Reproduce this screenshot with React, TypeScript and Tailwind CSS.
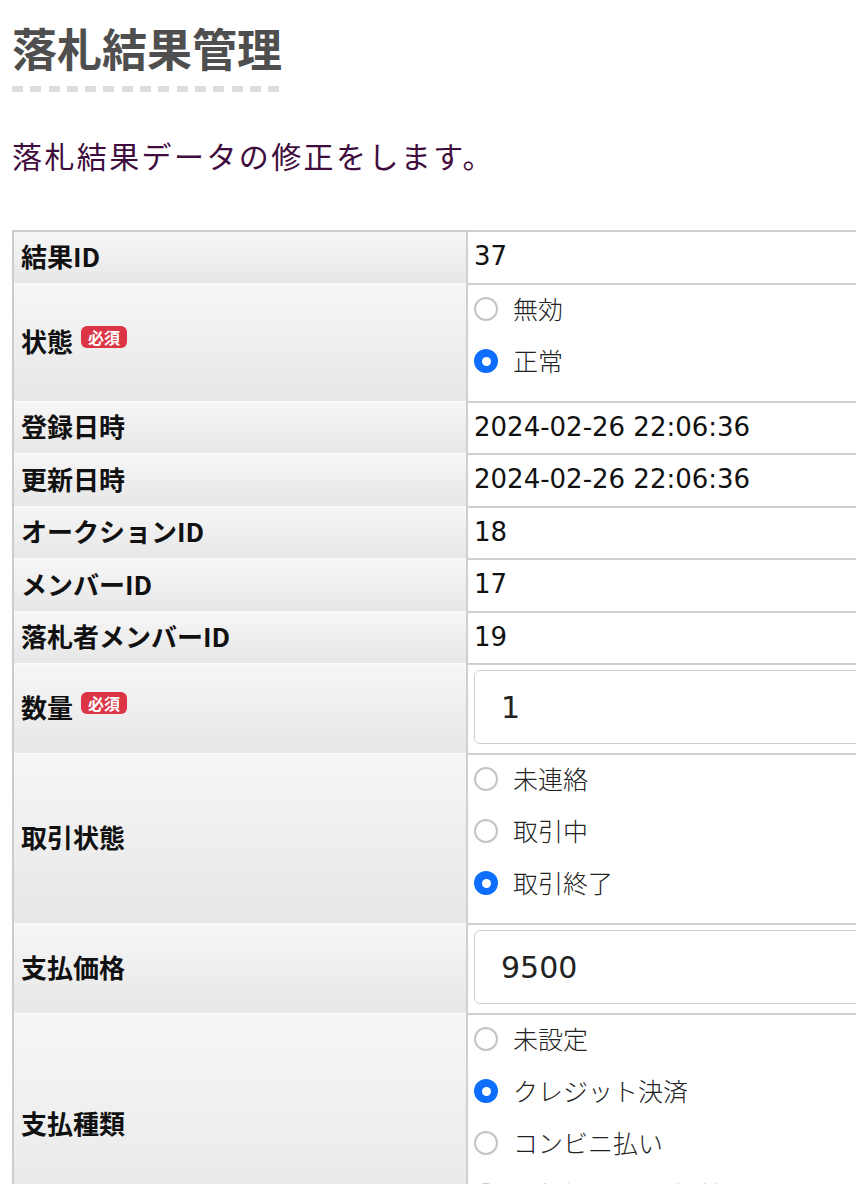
import React from "react";

type Opt = { label: string; checked?: boolean };
type Row = {
  label: string;
  required?: boolean;
  h: string;
  value?: string;
  input?: string;
  options?: Opt[];
};

const rows: Row[] = [
  { label: "結果ID", h: "h-[53px]", value: "37" },
  {
    label: "状態",
    required: true,
    h: "h-[118px]",
    options: [{ label: "無効" }, { label: "正常", checked: true }],
  },
  { label: "登録日時", h: "h-[52px]", value: "2024-02-26 22:06:36" },
  { label: "更新日時", h: "h-[53px]", value: "2024-02-26 22:06:36" },
  { label: "オークションID", h: "h-[52px]", value: "18" },
  { label: "メンバーID", h: "h-[53px]", value: "17" },
  { label: "落札者メンバーID", h: "h-[52px]", value: "19" },
  { label: "数量", required: true, h: "h-[90px]", input: "1" },
  {
    label: "取引状態",
    h: "h-[170px]",
    options: [
      { label: "未連絡" },
      { label: "取引中" },
      { label: "取引終了", checked: true },
    ],
  },
  { label: "支払価格", h: "h-[90px]", input: "9500" },
  {
    label: "支払種類",
    h: "h-[222px]",
    options: [
      { label: "未設定" },
      { label: "クレジット決済", checked: true },
      { label: "コンビニ払い" },
      { label: "銀行振込/郵便振替" },
    ],
  },
];

const jp = "font-['Noto_Sans_CJK_JP',sans-serif]";
const num = "font-['DejaVu_Sans','Noto_Sans_CJK_JP',sans-serif]";

function Radio({ checked }: { checked?: boolean }) {
  if (checked) {
    return (
      <span className="flex h-[24px] w-[24px] shrink-0 items-center justify-center rounded-full bg-[#0d6efd]">
        <span className="h-[9px] w-[9px] rounded-full bg-white" />
      </span>
    );
  }
  return <span className="h-[24px] w-[24px] shrink-0 rounded-full border-2 border-[#c4c4c4] bg-white" />;
}

function FormRow({ row, first }: { row: Row; first: boolean }) {
  return (
    <div className={`flex ${row.h}`}>
      <div
        className={`flex w-[452px] shrink-0 items-center gap-[8px] border-t-2 bg-gradient-to-b from-[#f6f6f6] to-[#e7e7e7] pb-[4px] pl-[7px] ${
          first ? "border-t-[#cccccc]" : "border-t-[#f9f9f9]"
        }`}
      >
        <span className={`${jp} text-[26px] font-bold leading-[34px] text-[#111]`}>{row.label}</span>
        {row.required && (
          <span
            className={`${jp} mb-[8px] rounded-[6px] bg-[#dc3545] px-[7px] text-[16px] font-bold leading-[22px] text-white`}
          >
            必須
          </span>
        )}
      </div>
      <div className="flex-1 border-l-2 border-t-2 border-[#cfcfcf] bg-white pl-[6px]">
        {row.value && (
          <div className={`${num} flex h-full items-center pb-[2px] text-[26px] text-[#111]`}>{row.value}</div>
        )}
        {row.input && (
          <div className="pt-[5px]">
            <div
              className={`${num} flex h-[74px] items-center rounded-[6px] border border-[#cfcfcf] pl-[26px] text-[30px] text-[#222]`}
            >
              {row.input}
            </div>
          </div>
        )}
        {row.options && (
          <div className="pt-[5px]">
            {row.options.map((o) => (
              <div key={o.label} className="mb-[14px] flex h-[38px] items-center gap-[15px]">
                <Radio checked={o.checked} />
                <span className={`${jp} text-[25px] font-light text-[#222]`}>{o.label}</span>
              </div>
            ))}
          </div>
        )}
      </div>
    </div>
  );
}

export default function App() {
  return (
    <div className="min-h-[1184px] w-full overflow-hidden bg-white">
      <div className="pl-[12px]">
        <h1 className={`${jp} pt-[20px] text-[45px] font-bold leading-[56px] text-[#4f4f4f]`}>
          落札結果管理
        </h1>
        <div className="mt-[10px] h-[6px] w-[268px] bg-[repeating-linear-gradient(90deg,#dddddd_0_11px,transparent_11px_18.3px)]" />
        <p className={`${jp} mt-[43px] text-[30px] leading-[40px] tracking-[2.4px] text-[#3f0c3e]`}>
          落札結果データの修正をします。
        </p>
        <div className="mt-[55px] w-[1000px] border-l-2 border-[#cccccc]">
          {rows.map((r, i) => (
            <FormRow key={r.label} row={r} first={i === 0} />
          ))}
        </div>
      </div>
    </div>
  );
}
